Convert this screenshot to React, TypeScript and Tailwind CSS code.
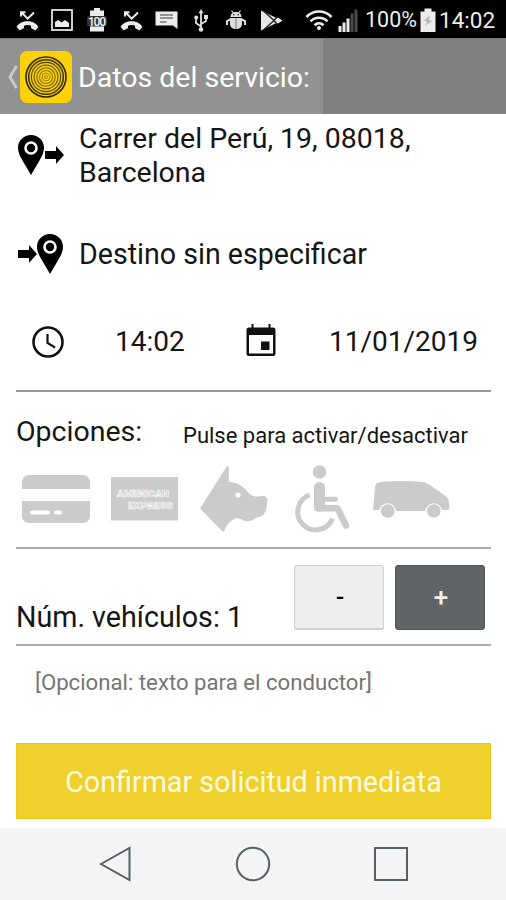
import type { ReactNode } from "react"
import { clsx } from "clsx"

function MissedCallIcon() {
  return (
    <svg className="h-[22px] w-[23px]" viewBox="0 0 23 22" fill="none" aria-hidden>
      <path d="M.5 18C3 14 7 12.300 11.500 12.300s8.500 1.700 11 5.700l-3.300 3.500-4.200-2.500v-2.300c-2.200-.8-4.800-.8-7 0V19l-4.200 2.500z" fill="#ececec" />
      <path d="M6 4l5.700 5.700L18 3.500M5 7.500V3.200h4.500" stroke="#ececec" strokeWidth="2" />
    </svg>
  )
}

function ImageIcon() {
  return (
    <svg className="h-[22px] w-[22px]" viewBox="0 0 22 22" aria-hidden>
      <rect x="1" y="1" width="20" height="20" fill="none" stroke="#e4e4e4" strokeWidth="1.800" />
      <path d="M4 18v-5l3-2 3.500 2.500L14 11l4 3v4z" fill="#ececec" />
    </svg>
  )
}

function FullBatteryIcon() {
  return (
    <svg className="h-6 w-5" viewBox="0 0 20 24" aria-hidden>
      <path d="M7 0h6v2.500h4V23.500H3V2.500h4z" fill="#ececec" />
      <rect x="0" y="8" width="20" height="10.500" rx="2" fill="#333" />
      <text x="10" y="17.500" textAnchor="middle" fontFamily="Roboto, sans-serif" fontSize="12" fontWeight="500" textLength="18" fill="#f5f5f5">
        100
      </text>
    </svg>
  )
}

function MessageIcon() {
  return (
    <svg className="h-[19px] w-[23px]" viewBox="0 0 23 19" aria-hidden>
      <path d="M.5.5h22V18l-4.500-3.500H.5z" fill="#ececec" />
      <path d="M5 4h13M5 7h13M5 11h6.500" stroke="#777" strokeWidth="1.500" />
    </svg>
  )
}

function UsbIcon() {
  return (
    <svg className="h-[23px] w-[14px]" viewBox="0 0 14 23" fill="none" stroke="#dedede" strokeWidth="1.800" aria-hidden>
      <path d="M7 3v17M7 17.500L2 14V9M7 15l5-3V8" />
      <path d="M7 0l2.500 4.200h-5z" fill="#dedede" stroke="none" />
      <circle cx="7" cy="20.500" r="2.300" fill="#dedede" stroke="none" />
      <circle cx="2.200" cy="8.500" r="2" fill="#dedede" stroke="none" />
      <rect x="10" y="6" width="4" height="4" fill="#dedede" stroke="none" />
    </svg>
  )
}

function AndroidIcon() {
  return (
    <svg className="h-5 w-5" viewBox="0 0 20 20" fill="#dedede" aria-hidden>
      <path d="M4.500 7c0-3 2-5 5.500-5s5.500 2 5.500 5z" />
      <path d="M5.500.5l2 2.500M14.500.5l-2 2.500" stroke="#dedede" strokeWidth="1.200" />
      <path d="M4 8h12v6c0 3-2.500 5-6 5s-6-2-6-5z" />
      <path d="M4 9.500L1 11v4M16 9.500l3 1.500v4" fill="none" stroke="#dedede" strokeWidth="2" />
      <path d="M10 8v11" stroke="#777" strokeWidth="1" />
      <circle cx="7.800" cy="4.800" r=".8" fill="#222" />
      <circle cx="12.200" cy="4.800" r=".8" fill="#222" />
    </svg>
  )
}

function PlayStoreIcon() {
  return (
    <svg className="h-[21px] w-[23px]" viewBox="0 0 23 21" aria-hidden>
      <path d="M1 .5L16.500 8 18 7.500l4.500 3-4.500 3-1.500-.5L1 20.500z" fill="#e8e8e8" />
      <path d="M3 .5L14 10.500 3 20.500M14 10.500l3-3.500M14 10.500l3 3.500" stroke="#222" strokeWidth="1.400" fill="none" />
    </svg>
  )
}

function WifiIcon() {
  return (
    <svg className="h-[22px] w-[28px]" viewBox="0 0 28 22" fill="none" stroke="#ececec" strokeWidth="2.600" aria-hidden>
      <path d="M1.500 8c7-7.300 18-7.300 25 0M5.500 12.300c4.800-4.800 12.200-4.800 17 0M9.500 16.200c2.600-2.500 6.400-2.500 9 0" />
      <circle cx="14" cy="19" r="2" fill="#ececec" stroke="none" />
    </svg>
  )
}

function SignalIcon() {
  return (
    <svg className="h-[23px] w-5" viewBox="0 0 20 23" aria-hidden>
      <path d="M.5 17h3v6h-3zM4.500 13.500h3V23h-3zM8.500 9.500h3V23h-3z" fill="#ececec" />
      <path d="M12.500 4.500h3V23h-3zM16.500.5h3V23h-3z" fill="#4b4b4b" />
    </svg>
  )
}

function ChargingIcon() {
  return (
    <svg className="h-6 w-4" viewBox="0 0 16 24" aria-hidden>
      <path d="M4.500.5h7v3H15.500V24H.5V3.500h4z" fill="#ececec" />
      <path d="M10.500 7L4 12.500l3.500 1.500-2.500 4 7-5-3.500-1.500z" fill="#b5b5b5" />
    </svg>
  )
}

function StatusBar() {
  return (
    <div className="flex h-[38px] items-center bg-black pt-0.5 pl-4 text-[#ececec]">
      <MissedCallIcon />
      <span className="ml-3"><ImageIcon /></span>
      <span className="ml-3.5"><FullBatteryIcon /></span>
      <span className="ml-[13px]"><MissedCallIcon /></span>
      <span className="ml-3"><MessageIcon /></span>
      <span className="ml-4"><UsbIcon /></span>
      <span className="ml-[18px]"><AndroidIcon /></span>
      <span className="ml-3.5"><PlayStoreIcon /></span>
      <span className="ml-[22px]"><WifiIcon /></span>
      <span className="ml-[5px]"><SignalIcon /></span>
      <span className="ml-[7px] w-[55px] text-[21.500px] leading-6 whitespace-nowrap">100%</span>
      <ChargingIcon />
      <span className="ml-[3px] text-[22.500px] leading-6">14:02</span>
    </div>
  )
}

const RINGS = [20, 17.300, 14.600, 11.900, 9.200, 6.500, 3.800, 1.400]

function AppLogo() {
  return (
    <svg className="h-[52px] w-[52px]" viewBox="0 0 52 52" aria-hidden>
      <rect width="52" height="52" rx="7" fill="#fdd108" />
      <g fill="none" stroke="#2b2500">
        {RINGS.map((r, i) => (
          <circle key={r} cx="26" cy="26" r={r} strokeWidth={i < 2 ? 1.600 : 1.100} opacity={1 - i * 0.09} />
        ))}
      </g>
    </svg>
  )
}

function Header() {
  return (
    <header className="flex h-[76px] border-t border-[#777] bg-[#808080]">
      <div className="flex w-[323px] items-center bg-[#929292] pl-[7px]">
        <svg className="h-6 w-[11px]" viewBox="0 0 11 24" fill="none" stroke="#c9c9c9" strokeWidth="3" aria-hidden>
          <path d="M9.500 1L3 12l6.500 11" />
        </svg>
        <span className="ml-0.5"><AppLogo /></span>
        <h1 className="ml-1.5 pt-[3px] text-[28.500px] whitespace-nowrap text-white">Datos del servicio:</h1>
      </div>
    </header>
  )
}

const PIN = "M13 0C5.800 0 0 5.600 0 12.800c0 4.500 2 8.500 4.500 12.700L13 40l8.500-14.500C24 21.300 26 17.300 26 12.800 26 5.600 20.200 0 13 0z"
const ARROW = "M0 5h11V0l8 9-8 9v-5H0z"

function PlaceIcon({ kind }: { kind: "origin" | "destination" }) {
  const origin = kind === "origin"
  return (
    <svg className="h-10 w-[46px] shrink-0" viewBox="0 0 46 40" aria-hidden>
      <g transform={origin ? undefined : "translate(19 0)"}>
        <path d={PIN} />
        <circle cx="13" cy="13" r="5.500" fill="none" stroke="#fff" strokeWidth="2.600" />
      </g>
      <path d={ARROW} transform={origin ? "translate(27 11)" : "translate(0 11)"} />
    </svg>
  )
}

function ClockIcon() {
  return (
    <svg className="h-8 w-8" viewBox="0 0 32 32" fill="none" stroke="#111" strokeWidth="2.600" aria-hidden>
      <circle cx="16" cy="16" r="14.500" />
      <path d="M15.500 8v9l7.500 4.500" strokeWidth="2.200" />
    </svg>
  )
}

function CalendarIcon() {
  return (
    <svg className="h-8 w-[30px]" viewBox="0 0 30 32" aria-hidden>
      <path d="M5.500 0h2v3.500h15V0h2v3.500H27a2.500 2.500 0 0 1 2.500 2.500v23.500A2.500 2.500 0 0 1 27 32H3a2.500 2.500 0 0 1-2.500-2.500V6A2.500 2.500 0 0 1 3 3.500h2.500zM3 11v18.500h24V11z" fill="#111" />
      <rect x="15" y="17.500" width="8.500" height="8.500" fill="#111" />
    </svg>
  )
}

function CardIcon() {
  return (
    <svg className="h-12 w-[68px]" viewBox="0 0 68 48" fill="#cbcbcb" aria-hidden>
      <path d="M0 14V7a7 7 0 0 1 7-7h54a7 7 0 0 1 7 7v7zM0 26h68v15a7 7 0 0 1-7 7H7a7 7 0 0 1-7-7z" />
      <path d="M10 37.500h16M34 37.500h4" stroke="#fff" strokeWidth="4" strokeLinecap="round" />
    </svg>
  )
}

function AmexIcon() {
  return (
    <svg className="h-11 w-[67px]" viewBox="0 0 67 44" aria-hidden>
      <rect width="67" height="43.500" fill="#cbcbcb" />
      <g fontFamily="Roboto, sans-serif" fontSize="9.500" fontWeight="900" fill="#cbcbcb" stroke="#f4f4f4" strokeWidth=".7">
        <text x="6" y="19.500" textLength="52" lengthAdjust="spacingAndGlyphs">AMERICAN</text>
        <text x="17" y="31.500" textLength="45" lengthAdjust="spacingAndGlyphs">EXPRESS</text>
      </g>
    </svg>
  )
}

function DogIcon() {
  return (
    <svg className="h-[66px] w-[68px]" viewBox="0 0 68 66" aria-hidden>
      <path
        d="M26.500.8Q28.500-.5 28.800 2V16C37 16.500 42 19 46.500 24.500 50 29 53 30.500 57 30.500 61 30.500 64.500 29 66.500 31.500 68.500 34 67 37 66.500 41 66 46 64 50 59 51 54 52 53 55.500 48 55.500 43 55.500 40 51.500 35.500 52.500 30.500 54 26 60 24 65.500H22.500L0 42.500z"
        fill="#cbcbcb"
      />
      <circle cx="38" cy="29" r="2.600" fill="#fff" />
    </svg>
  )
}

function WheelchairIcon() {
  return (
    <svg className="h-[68px] w-[55px]" viewBox="0 0 55 68" fill="none" stroke="#cbcbcb" strokeLinecap="round" strokeLinejoin="round" aria-hidden>
      <circle cx="24.500" cy="7" r="6.800" fill="#cbcbcb" stroke="none" />
      <path d="M24.500 22.500v18.500" strokeWidth="11" />
      <path d="M27 34.300h13.500" strokeWidth="5" />
      <path d="M22.500 43.200h20L51 60.500" strokeWidth="6.500" />
      <path d="M14.500 30A18 18 0 1 0 37.500 53.500" strokeWidth="5" strokeLinecap="butt" />
    </svg>
  )
}

function VanIcon() {
  return (
    <svg className="h-[37px] w-[77px]" viewBox="0 0 77 37" fill="#cbcbcb" aria-hidden>
      <path d="M0 29L2 7C2.300 3.500 3.500 1.500 7 1.200 20-.2 36-.2 50 1c3 .5 5 2 8 3.800L70.500 13.500c3.500 2.500 5 4 5.500 8 .5 4 .5 7.500-1 7.500h-5.800a8.600 8.600 0 0 0-16.800 0v1H23v-1a8.600 8.600 0 0 0-16.800 0z" />
      <circle cx="14.700" cy="30" r="6.800" />
      <circle cx="60.800" cy="30" r="6.800" />
    </svg>
  )
}

function StepButton({ children, dark = false }: { children: ReactNode; dark?: boolean }) {
  return (
    <button
      type="button"
      className={clsx(
        "flex h-[65px] w-[90px] items-center justify-center rounded-[3px] border font-medium",
        dark
          ? "border-[#505457] bg-[#606466] pl-0.5 text-[26px] text-[#f0f0f0]"
          : "border-[#cfcfcf] border-b-2 bg-[#eee] pl-0.5 text-[24px] text-black"
      )}
    >
      {children}
    </button>
  )
}

function NavBar() {
  return (
    <nav className="flex h-[72px] items-center bg-[#f4f4f4] pl-[99px]">
      <svg className="h-9 w-8" viewBox="0 0 32 36" fill="none" stroke="#566166" strokeWidth="2" aria-hidden>
        <path d="M2 18L30.500 2v32z" />
      </svg>
      <svg className="ml-[104px] h-9 w-9" viewBox="0 0 36 36" fill="none" stroke="#566166" strokeWidth="2" aria-hidden>
        <circle cx="18" cy="18" r="16.200" />
      </svg>
      <svg className="ml-[102px] h-9 w-9" viewBox="0 0 36 36" fill="none" stroke="#566166" strokeWidth="2" aria-hidden>
        <rect x="2" y="2" width="32" height="32" />
      </svg>
    </nav>
  )
}

export default function App() {
  return (
    <div className="flex h-[900px] w-[506px] flex-col overflow-hidden bg-white font-['Roboto',sans-serif] text-[#151515]">
      <StatusBar />
      <Header />
      <main className="flex flex-1 flex-col pr-[15px] pl-4">
        <section className="flex h-[95px] pt-2 pl-0.5">
          <div className="pt-[13px]"><PlaceIcon kind="origin" /></div>
          <p className="ml-[15px] text-[28.500px] leading-[34px] whitespace-nowrap">
            Carrer del Perú, 19, 08018,
            <br />
            Barcelona
          </p>
        </section>
        <section className="flex h-[90px] items-center pl-0.5">
          <PlaceIcon kind="destination" />
          <p className="ml-[15px] pt-px text-[28.600px] whitespace-nowrap">Destino sin especificar</p>
        </section>
        <section className="flex h-[93px] items-center border-b-2 border-[#999] pb-1.5 pl-4 text-[28px]">
          <ClockIcon />
          <span className="ml-[51px] w-[71px] whitespace-nowrap">14:02</span>
          <span className="ml-[60px] pb-1"><CalendarIcon /></span>
          <span className="ml-[53px] whitespace-nowrap">11/01/2019</span>
        </section>

        <section className="h-[157px] border-b-2 border-[#aaa]">
          <div className="flex h-[73px] items-center pt-[7px]">
            <h2 className="w-[167px] text-[28.500px]">Opciones:</h2>
            <p className="pt-1.5 text-[22px] whitespace-nowrap">Pulse para activar/desactivar</p>
          </div>
          <div className="flex h-[68px] items-center pl-1.5">
            <CardIcon />
            <span className="ml-[21px]"><AmexIcon /></span>
            <span className="ml-[22px]"><DogIcon /></span>
            <span className="ml-[27px]"><WheelchairIcon /></span>
            <span className="ml-[23px]"><VanIcon /></span>
          </div>
        </section>

        <section className="flex h-[97px] border-b-2 border-[#aaa] pt-4">
          <p className="w-[278px] pt-[31px] text-[28.700px] whitespace-nowrap">Núm. vehículos: 1</p>
          <div className="flex gap-[11px]">
            <StepButton>-</StepButton>
            <StepButton dark>+</StepButton>
          </div>
        </section>

        <p className="pt-5 pl-[19px] text-[22.200px] whitespace-nowrap text-[#757575]">[Opcional: texto para el conductor]</p>
        <button type="button" className="mt-auto mb-[9px] h-[76px] border border-[#ecc81c] bg-[#f0d02c] pt-1 text-[28.700px] text-[#fffbe0]">
          Confirmar solicitud inmediata
        </button>
      </main>
      <NavBar />
    </div>
  )
}
